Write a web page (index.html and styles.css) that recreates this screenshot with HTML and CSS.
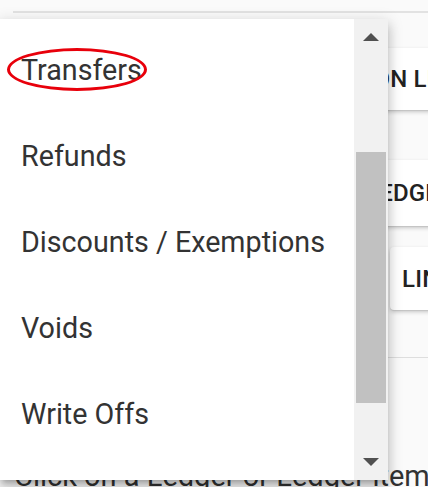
FILE: index.html
```html
<!DOCTYPE html>
<html lang="en">
<head>
    <meta charset="UTF-8">
    <meta name="viewport" content="width=device-width, initial-scale=1.0">
    <title>Ledger Adjustments</title>
    <link rel="stylesheet" href="styles.css">
</head>
<body>
    <div class="page">
        <div class="top-rule"></div>

        <div class="actions">
            <div class="action-card card-transaction">TRANSACTION LEDGER</div>
            <div class="action-card card-ledger">LEDGER</div>
            <div class="action-card card-lines">LINE ITEMS</div>
        </div>

        <div class="divider"></div>

        <p class="hint">Click on a Ledger or Ledger item</p>
    </div>

    <!-- adjustment type dropdown, opened -->
    <div class="menu">
        <ul class="menu-list">
            <li class="menu-item">
                Transfers
                <span class="mark"></span>
            </li>
            <li class="menu-item">Refunds</li>
            <li class="menu-item">Discounts / Exemptions</li>
            <li class="menu-item">Voids</li>
            <li class="menu-item">Write Offs</li>
        </ul>
        <div class="scrollbar">
            <div class="scroll-btn"><span class="arrow-up"></span></div>
            <div class="scroll-track">
                <div class="scroll-thumb"></div>
            </div>
            <div class="scroll-btn"><span class="arrow-down"></span></div>
        </div>
    </div>
</body>
</html>
```

FILE: styles.css
```css
body {
    margin: 0;
    font-family: Roboto, "Liberation Sans", Arial, sans-serif;
    background-color: #fafafa;
    color: #333;
    overflow: hidden;
    height: 487px;
}
.page {
    position: relative;
    height: 100%;
}
.top-rule {
    margin: 11px 0 0 13px;
    height: 2px;
    background-color: #e2e2e2;
}
.actions {
    display: flex;
    flex-direction: column;
    align-items: flex-start;
}
.action-card {
    background-color: #fff;
    border-radius: 4px;
    box-shadow: 0 2px 4px rgba(0, 0, 0, 0.2), 0 1px 1px rgba(0, 0, 0, 0.08);
    padding: 0 12px;
    font-size: 24px;
    font-weight: 500;
    letter-spacing: 0.2px;
    color: #222;
    white-space: nowrap;
    display: flex;
    align-items: center;
    width: 260px;
}
.card-transaction {
    margin: 35px 0 0 230px;
    height: 62px;
}
.card-ledger {
    margin: 50px 0 0 354px;
    height: 66px;
}
.card-lines {
    margin: 21px 0 0 390px;
    height: 63px;
}
.divider {
    margin-top: 47px;
    height: 1px;
    background-color: #dedede;
}
.hint {
    margin: 0;
    padding: 98px 0 0 14px;
    font-size: 29px;
    line-height: 40px;
    white-space: nowrap;
}

.menu {
    position: absolute;
    top: 19px;
    left: 0;
    width: 388px;
    height: 461px;
    background-color: #fff;
    box-shadow: 0 5px 5px -3px rgba(0, 0, 0, 0.2), 0 8px 10px 1px rgba(0, 0, 0, 0.14), 0 3px 14px 2px rgba(0, 0, 0, 0.12);
    display: flex;
}
.menu-list {
    flex: 1;
    list-style: none;
    margin: 0;
    padding: 8px 0 0;
}
.menu-item {
    position: relative;
    height: 86px;
    line-height: 86px;
    padding-left: 21px;
    font-size: 28.7px;
    color: #333;
}
.mark {
    position: absolute;
    left: 7px;
    top: 21px;
    width: 134px;
    height: 37px;
    border: 3px solid #e8000b;
    border-radius: 50%;
}
.scrollbar {
    width: 34px;
    background-color: #f1f1f1;
    display: flex;
    flex-direction: column;
}
.scroll-btn {
    height: 36px;
    display: flex;
    justify-content: center;
    align-items: center;
}
.arrow-up {
    border-left: 8px solid transparent;
    border-right: 8px solid transparent;
    border-bottom: 8px solid #505050;
}
.arrow-down {
    border-left: 8px solid transparent;
    border-right: 8px solid transparent;
    border-top: 8px solid #505050;
}
.scroll-track {
    flex: 1;
    padding: 97px 2px 0;
}
.scroll-thumb {
    height: 251px;
    background-color: #c1c1c1;
}
```
